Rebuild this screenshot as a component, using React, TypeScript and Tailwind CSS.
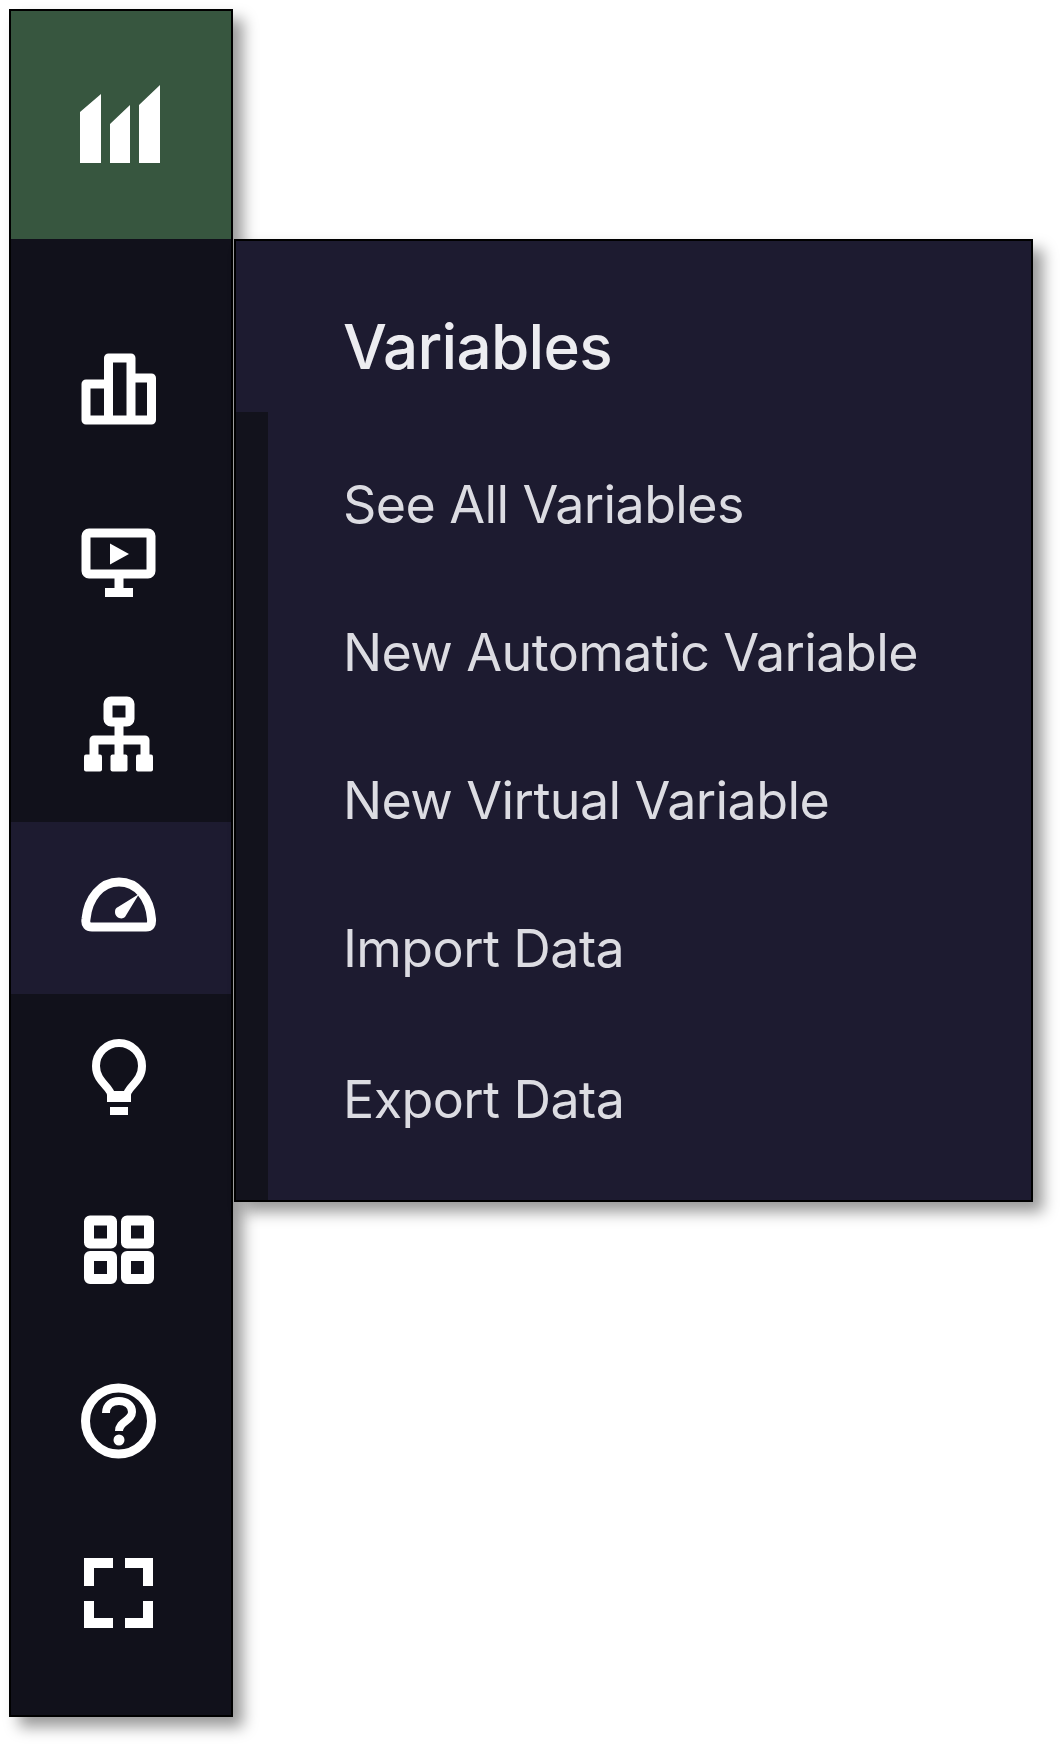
const strokeProps = { fill: 'none', stroke: 'white', strokeWidth: 9, strokeLinejoin: 'round' as const };

function Glyph({ children }: { children: React.ReactNode }) {
  return (
    <svg viewBox="0 0 100 100" className="h-[100px] w-[100px] blur-[0.7px]">
      {children}
    </svg>
  );
}

const icons = [
  <Glyph key="bars">
    <path {...strokeProps} d="M17 81V45H39.5V19H62V39H82.5V81ZM39.5 81V45M62 81V39" />
  </Glyph>,
  <Glyph key="monitor">
    <rect {...strokeProps} x="17" y="22" width="65" height="41" rx="3" />
    <path {...strokeProps} d="M50 63V81M36 81.5H64" />
    <path fill="white" d="M41 32.5L60 43L41 53.5Z" />
  </Glyph>,
  <Glyph key="network">
    <rect {...strokeProps} x="39" y="18" width="22" height="21" rx="3" />
    <path {...strokeProps} d="M50 39V57M25 75V57H76V75M50 57V75" />
    <rect x="15" y="71.5" width="18" height="17" rx="2" fill="white" />
    <rect x="41.5" y="71.5" width="17" height="17" rx="2" fill="white" />
    <rect x="67" y="71.5" width="17" height="17" rx="2" fill="white" />
  </Glyph>,
  <Glyph key="gauge">
    <path {...strokeProps} d="M23 72H77C81 72 83 70 82.5 64C81 43 68 27 50 27C32 27 19 43 17 64C16 70 19 72 23 72Z" />
    <path fill="white" d="M70 39L56 62C53 65 46 63 46 57C46 54 47 53 49 52Z" />
  </Glyph>,
  <Glyph key="bulb">
    <path {...strokeProps} strokeWidth="8" d="M42 68C42 60 27 55 27 39A23 23 0 0 1 73 39C73 55 58 60 58 68Z" />
    <path {...strokeProps} strokeWidth="8" d="M38 71H62M41 84H59" />
  </Glyph>,
  <Glyph key="grid">
    <rect {...strokeProps} strokeWidth="10" x="20" y="21.5" width="23" height="23" rx="1" />
    <rect {...strokeProps} strokeWidth="10" x="57" y="21.5" width="23" height="23" rx="1" />
    <rect {...strokeProps} strokeWidth="10" x="20" y="57" width="23" height="23" rx="1" />
    <rect {...strokeProps} strokeWidth="10" x="57" y="57" width="23" height="23" rx="1" />
  </Glyph>,
  <Glyph key="help">
    <circle {...strokeProps} cx="49.5" cy="50" r="33" />
    <path fill="none" stroke="white" strokeWidth="8" d="M37 42C37 34 43 30 50 30C57 30 63 34 63 41C63 50 50 50 50 60" />
    <circle cx="50" cy="69" r="5.5" fill="white" />
  </Glyph>,
  <Glyph key="fullscreen">
    <path fill="none" stroke="white" strokeWidth="10" d="M20 43V20H44M56 20H79V43M20 58V80H44M56 80H79V58" />
  </Glyph>,
];

const menuItems = ['See All Variables', 'New Automatic Variable', 'New Virtual Variable', 'Import Data', 'Export Data'];

export default function App() {
  return (
    <div className="flex min-h-[1747px] items-start bg-white pl-[9px] pt-[9px] font-['Inter',sans-serif]">
      <div className="flex h-[1708px] w-[224px] flex-col border-2 border-black bg-[#11111b] shadow-[10px_10px_14px_rgba(0,0,0,0.4)]">
        <div className="flex h-[228px] items-center justify-center bg-[#37563f] pr-[2px]">
          <svg viewBox="0 0 80 80" className="h-[80px] w-[80px] -translate-y-[2px] blur-[0.7px]">
            <path fill="white" d="M0 29L21 11V80H0ZM30 41L50 22V80H30ZM59 22L80 2V80H59Z" />
          </svg>
        </div>
        <div className="pt-[67px]">
          {icons.map((icon, idx) => (
            <div
              key={idx}
              className={`flex h-[172px] items-center justify-center pr-[4px] pb-[6px] ${idx === 3 ? 'bg-[#1d1b30]' : ''}`}
            >
              {icon}
            </div>
          ))}
        </div>
      </div>
      <div className="mt-[230px] ml-px flex h-[963px] w-[799px] flex-col border-2 border-black bg-[#1d1b30] shadow-[10px_10px_14px_rgba(0,0,0,0.4)]">
        <div className="flex h-[171px] items-center pl-[107px] pt-[39px] text-[62px] font-medium tracking-[-0.7px] text-[#ececf0] blur-[0.6px]">
          Variables
        </div>
        <div className="flex flex-1">
          <div className="w-[32px] bg-[#12121c]" />
          <div className="flex flex-1 flex-col pl-[75px] pt-[19px]">
            {menuItems.map((item) => (
              <div key={item} className="flex h-[148px] items-center text-[52px] tracking-[-0.6px] text-[#dcdce2] blur-[0.6px] last:mt-[3px]">
                {item}
              </div>
            ))}
          </div>
        </div>
      </div>
    </div>
  );
}
